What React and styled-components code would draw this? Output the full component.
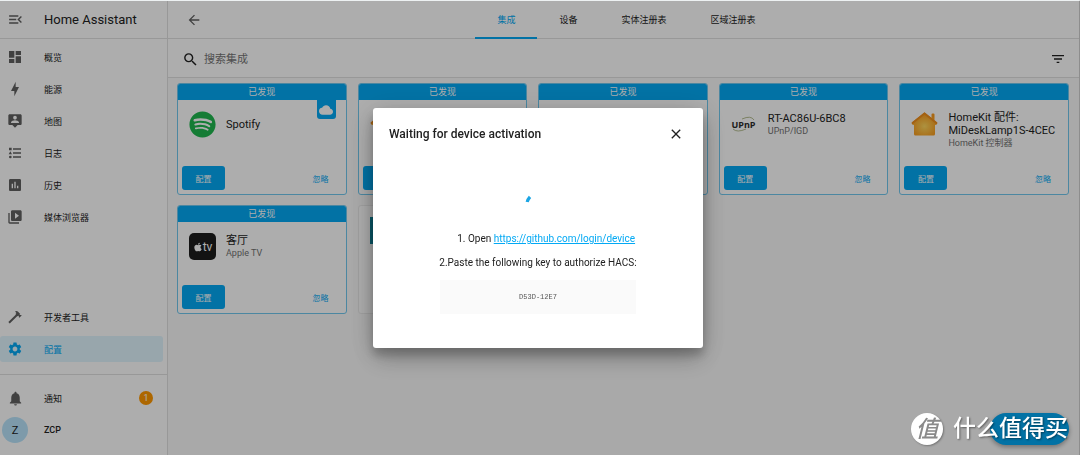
import { useState } from 'react';
import styled, { createGlobalStyle, css } from 'styled-components';
import {
  MdArrowBack,
  MdAssessment,
  MdClose,
  MdCloud,
  MdDashboard,
  MdFilterList,
  MdMenuOpen,
  MdNotifications,
  MdSearch,
  MdSettings,
  MdVideoLibrary,
} from 'react-icons/md';
import { FaApple, FaSpotify } from 'react-icons/fa';

const GlobalStyle = createGlobalStyle`
  * {
    box-sizing: border-box;
  }

  body {
    margin: 0;
    background: #fafafa;
    color: #212121;
    font-family: Roboto, 'Noto Sans CJK SC', sans-serif;
    font-size: 9px;
  }

  button,
  input {
    font: inherit;
    color: inherit;
    border: none;
    background: none;
    padding: 0;
  }

  button {
    cursor: pointer;
  }
`;

const Layout = styled.div`
  display: flex;
  min-height: 100vh;
  border-top: 1px solid #edf1f2;
  border-right: 1px solid #d0d0d0;
`;

/* ---------- sidebar ---------- */

const Sidebar = styled.aside`
  display: flex;
  flex-direction: column;
  flex: 0 0 168px;
  background: #ffffff;
  border-right: 1px solid #e0e0e0;
`;

const SidebarHeader = styled.header`
  display: flex;
  align-items: center;
  gap: 20px;
  height: 38px;
  padding-left: 7px;
  border-bottom: 1px solid #e0e0e0;
  font-size: 13px;
`;

const IconButton = styled.button`
  display: flex;
  align-items: center;
  justify-content: center;
  justify-self: start;
  color: ${props => props.$color || '#212121'};
`;

const NavList = styled.nav`
  display: flex;
  flex-direction: column;
  gap: 6px;
  padding: 5px 4px 12px 0;

  &:last-child {
    padding: 10px 4px 12px 0;
    border-top: 1px solid #e0e0e0;
  }
`;

const Spacer = styled.div`
  flex: 1;
`;

const NavLink = styled.a`
  display: flex;
  align-items: center;
  height: 26px;
  padding-right: 10px;
  border-radius: 3px;
  font-weight: ${props => (props.$strong ? 500 : 400)};
  color: #212121;
  text-decoration: none;

  svg {
    color: #606060;
  }

  ${props =>
    props.$active &&
    css`
      background: #e1f5fe;
      color: #03a9f4;

      svg {
        color: #03a9f4;
      }
    `}
`;

const NavIcon = styled.span`
  display: flex;
  justify-content: center;
  width: 30px;
  margin-right: 14px;
`;

const Count = styled.span`
  display: grid;
  place-items: center;
  width: 14px;
  height: 14px;
  margin-left: auto;
  border-radius: 50%;
  background: #ff9800;
  color: #ffffff;
`;

const Avatar = styled.span`
  display: grid;
  place-items: center;
  width: 26px;
  height: 26px;
  border-radius: 50%;
  background: #b8e4fb;
  font-size: 11px;
  font-weight: 400;
`;

/* ---------- main panel ---------- */

const Main = styled.main`
  flex: 1;
  min-width: 0;
`;

const Toolbar = styled.header`
  display: grid;
  grid-template-columns: 1fr auto 1fr;
  align-items: center;
  height: 38px;
  padding: 0 12px 0 18px;
  background: #ffffff;
  border-bottom: 1px solid #e0e0e0;
`;

const Tabs = styled.nav`
  display: flex;
  align-self: stretch;
`;

const Tab = styled.a`
  display: flex;
  align-items: center;
  height: 38px;
  padding: 0 22px;
  color: ${props => (props.$active ? '#03a9f4' : '#212121')};
  border-bottom: 2px solid
    ${props => (props.$active ? '#03a9f4' : 'transparent')};
  text-decoration: none;
`;

const SearchBar = styled.div`
  display: flex;
  align-items: center;
  gap: 5px;
  height: 39px;
  padding: 2px 13px 0 14px;
  background: #ffffff;
  border-bottom: 1px solid #e0e0e0;
`;

const SearchInput = styled.input`
  flex: 1;
  min-width: 0;
  font-size: 11px;
  outline: none;

  &::placeholder {
    color: #757575;
    opacity: 1;
  }
`;

const CardGrid = styled.div`
  display: grid;
  grid-template-columns: repeat(5, 1fr);
  gap: 10px 11px;
  padding: 5px 10px 5px 9px;
`;

const Card = styled.article`
  display: flex;
  flex-direction: column;
  min-height: 109px;
  background: #ffffff;
  border: 1px solid ${props => (props.$discovered ? '#70c8ee' : '#ececec')};
  border-radius: 3px;
  overflow: hidden;
`;

const Banner = styled.div`
  position: relative;
  height: 16px;
  line-height: 16px;
  background: #03a9f4;
  color: #ffffff;
  text-align: center;
`;

const CloudBadge = styled.span`
  position: absolute;
  top: 16px;
  right: 10px;
  display: grid;
  place-items: center;
  width: 19px;
  height: 19px;
  border-radius: 0 0 3px 3px;
  background: #03a9f4;
`;

const CardHeader = styled.div`
  display: flex;
  gap: 10px;
  padding: 11px 6px ${props => (props.$multiline ? '16px' : '0')} 11px;
`;

const Logo = styled.div`
  display: flex;
  flex: 0 0 27px;
  height: 27px;
`;

const CardText = styled.div`
  display: flex;
  flex-direction: column;
  justify-content: center;
  min-width: 0;
  min-height: 27px;
`;

const CardTitle = styled.h2`
  margin: 0;
  font-size: 11px;
  line-height: 13px;
  font-weight: 400;
`;

const CardSubtitle = styled.p`
  margin: 0;
  line-height: 13px;
  color: #727272;
`;

const CardActions = styled.div`
  display: flex;
  align-items: center;
  justify-content: space-between;
  margin-top: auto;
  padding: 0 17px 4px 4px;
`;

const PrimaryButton = styled.button`
  width: 43px;
  height: 24px;
  border-radius: 3px;
  background: #03a9f4;
  color: #ffffff;
  font-size: 8px;
`;

const TextButton = styled.button`
  color: #03a9f4;
  font-size: 8px;
`;

const AppleTile = styled.div`
  display: flex;
  align-items: center;
  justify-content: center;
  width: 27px;
  height: 27px;
  border-radius: 5px;
  background: #1d1d1d;
  color: #ffffff;
  font-size: 12px;
`;

const TealTile = styled.div`
  width: 27px;
  height: 27px;
  background: #0d8299;
`;

const Fab = styled.button`
  position: fixed;
  right: 11px;
  bottom: 10px;
  width: 79px;
  height: 32px;
  border-radius: 16px;
  background: #03a9f4;
  box-shadow: 0 2px 5px rgba(0, 0, 0, 0.35);
`;

/* ---------- dialog ---------- */

const Scrim = styled.div`
  position: fixed;
  inset: 1px 0 0;
  display: flex;
  align-items: center;
  justify-content: center;
  padding-right: 4px;
  background: rgba(0, 0, 0, 0.32);
`;

const Dialog = styled.section`
  width: 330px;
  padding: 15px 16px 34px;
  border-radius: 3px;
  background: #ffffff;
  box-shadow: 0 7px 10px rgba(0, 0, 0, 0.2), 0 12px 24px rgba(0, 0, 0, 0.18),
    0 4px 28px rgba(0, 0, 0, 0.16);
`;

const DialogHeader = styled.header`
  display: flex;
  align-items: center;
  justify-content: space-between;
  height: 21px;
  padding-right: 3px;
`;

const DialogTitle = styled.h1`
  margin: 0;
  font-size: 12px;
  font-weight: 500;
`;

const DialogBody = styled.div`
  display: flex;
  flex-direction: column;
  align-items: center;
  padding-top: 46px;
  font-size: 10px;
  line-height: 16px;
`;

const Steps = styled.ol`
  margin: 14px 0 8px;
  padding-left: 27px;
`;

const StepLink = styled.a`
  color: #03a9f4;
`;

const StepText = styled.p`
  margin: 0;
`;

const DeviceKey = styled.pre`
  width: 196px;
  margin: 9px 0 0;
  padding: 9px;
  background: #fafafa;
  color: #555555;
  font-family: 'Liberation Mono', monospace;
  font-size: 7px;
  line-height: 16px;
  text-align: center;
`;

/* ---------- watermark ---------- */

const Watermark = styled.div`
  position: fixed;
  right: 12px;
  bottom: 10px;
  display: flex;
  align-items: center;
  gap: 10px;
  color: #ffffff;
  font-size: 23px;
  font-weight: 500;
  line-height: 33px;
  text-shadow: 1px 1px 2px rgba(0, 0, 0, 0.45);
  pointer-events: none;
`;

const WatermarkSeal = styled.span`
  display: grid;
  place-items: center;
  width: 32px;
  height: 32px;
  border-radius: 50%;
  background: #ffffff;
  color: #8a8a8a;
  font-style: italic;
  text-shadow: none;
  box-shadow: 1px 1px 2px rgba(0, 0, 0, 0.3);
`;

const PathIcon = ({ d, size = 16 }) => (
  <svg width={size} height={size} viewBox="0 0 24 24" fill="currentColor">
    <path d={d} />
  </svg>
);

const BOLT = 'M11 15H6L13 1V9H18L11 23V15Z';
const PERSON_PIN =
  'M20 2H4C2.9 2 2 2.9 2 4V16C2 17.1 2.9 18 4 18H8L12 22L16 18H20C21.1 18 22 17.1 22 16V4C22 2.9 21.1 2 20 2M12 4.3C13.5 4.3 14.7 5.5 14.7 7S13.5 9.7 12 9.7 9.3 8.5 9.3 7 10.5 4.3 12 4.3M18 15H6V14.1C6 12.1 10 11 12 11S18 12.1 18 14.1V15Z';
const LIST_TYPE =
  'M5 9.5L7.5 14H2.5L5 9.5M3 4H7V8H3V4M5 20A2 2 0 1 1 5 16A2 2 0 0 1 5 20M9 5V7H21V5H9M9 19V17H21V19H9M9 11V13H21V11H9Z';
const HAMMER =
  'M2 19.63L13.43 8.2L12.72 7.5L14.14 6.07L12 3.89C13.2 2.7 15.09 2.7 16.27 3.89L19.87 7.5L18.45 8.91H21.29L22 9.62L18.45 13.21L17.74 12.5V9.62L16.27 11.04L15.56 10.33L4.13 21.76L2 19.63Z';

const HomeKitLogo = () => (
  <svg width="27" height="27" viewBox="0 0 27 27">
    <defs>
      <radialGradient id="homekit" cx="50%" cy="60%" r="55%">
        <stop offset="0" stopColor="#ffd75e" />
        <stop offset="1" stopColor="#f99a1c" />
      </radialGradient>
    </defs>
    <path
      d="M13.5 1.5 20.5 7V3.5Q20.5 2.5 21.5 2.5H22.5Q23.5 2.5 23.5 3.5V10L26 11.5Q26.5 14 24 14V23Q24 24.5 22.5 24.5H4.5Q3 24.5 3 23V14Q.5 14 1 11.5Z"
      fill="url(#homekit)"
    />
    <path
      d="M1.5 12 13.5 2.5 25.5 12"
      fill="none"
      stroke="#f08f1c"
      strokeWidth="2"
      strokeLinecap="round"
    />
  </svg>
);

const UpnpLogo = () => (
  <svg width="27" height="27" viewBox="0 0 27 27">
    <path d="M11 8Q20 4 23 9" fill="none" stroke="#a3ad76" strokeWidth="0.8" />
    <path d="M2 18Q6 22 15 18" fill="none" stroke="#a3ad76" strokeWidth="0.8" />
    <text
      x="12.5"
      y="17"
      textAnchor="middle"
      fontFamily="Open Sans"
      fontWeight="700"
      fontSize="9"
      fill="#2b2b2b"
    >
      UPnP
    </text>
  </svg>
);

const logos = {
  spotify: <FaSpotify size={27} color="#1fb74f" />,
  homekit: <HomeKitLogo />,
  upnp: <UpnpLogo />,
  apple: (
    <AppleTile>
      <FaApple size={10} />
      tv
    </AppleTile>
  ),
  teal: <TealTile />,
};

const navItems = [
  { label: '概览', icon: <MdDashboard size={16} /> },
  { label: '能源', icon: <PathIcon d={BOLT} /> },
  { label: '地图', icon: <PathIcon d={PERSON_PIN} /> },
  { label: '日志', icon: <PathIcon d={LIST_TYPE} /> },
  { label: '历史', icon: <MdAssessment size={16} /> },
  { label: '媒体浏览器', icon: <MdVideoLibrary size={16} /> },
];

const tabs = ['集成', '设备', '实体注册表', '区域注册表'];

const integrations = [
  { id: 1, logo: 'spotify', title: 'Spotify', cloud: true, discovered: true },
  { id: 2, logo: 'homekit', discovered: true },
  { id: 3, discovered: true },
  { id: 4, logo: 'upnp', title: 'RT-AC86U-6BC8', subtitle: 'UPnP/IGD', discovered: true },
  {
    id: 5,
    logo: 'homekit',
    title: 'HomeKit 配件: MiDeskLamp1S-4CEC',
    subtitle: 'HomeKit 控制器',
    multiline: true,
    discovered: true,
  },
  { id: 6, logo: 'apple', title: '客厅', subtitle: 'Apple TV', discovered: true },
  { id: 7, logo: 'teal' },
];

const IntegrationCard = ({ item }) => (
  <Card $discovered={item.discovered}>
    {item.discovered && (
      <Banner>
        已发现
        {item.cloud && (
          <CloudBadge>
            <MdCloud size={14} />
          </CloudBadge>
        )}
      </Banner>
    )}
    <CardHeader $multiline={item.multiline}>
      <Logo>{logos[item.logo]}</Logo>
      <CardText>
        {item.title && <CardTitle>{item.title}</CardTitle>}
        {item.subtitle && <CardSubtitle>{item.subtitle}</CardSubtitle>}
      </CardText>
    </CardHeader>
    {item.discovered && (
      <CardActions>
        <PrimaryButton type="button" aria-label="配置">
          {item.title && '配置'}
        </PrimaryButton>
        {item.title && <TextButton type="button">忽略</TextButton>}
      </CardActions>
    )}
  </Card>
);

const ActivationDialog = ({ onClose }) => (
  <Scrim>
    <Dialog role="dialog" aria-modal="true" aria-labelledby="dialog-title">
      <DialogHeader>
        <DialogTitle id="dialog-title">Waiting for device activation</DialogTitle>
        <IconButton type="button" aria-label="Close" onClick={onClose}>
          <MdClose size={16} />
        </IconButton>
      </DialogHeader>
      <DialogBody>
        <svg width="27" height="27" viewBox="0 0 27 27">
          <path d="M2.2 12 Q2.8 9.2 5 6.8" fill="none" stroke="#1ba5e4" strokeWidth="3.2" />
        </svg>
        <Steps>
          <li>
            Open{' '}
            <StepLink href="https://github.com/login/device">
              https://github.com/login/device
            </StepLink>
          </li>
        </Steps>
        <StepText>2.Paste the following key to authorize HACS:</StepText>
        <DeviceKey>D53D-12E7</DeviceKey>
      </DialogBody>
    </Dialog>
  </Scrim>
);

const App = () => {
  const [open, setOpen] = useState(true);

  return (
    <>
      <GlobalStyle />
      <Layout>
        <Sidebar>
          <SidebarHeader>
            <IconButton type="button" aria-label="Menu" $color="#606060">
              <MdMenuOpen size={17} />
            </IconButton>
            Home Assistant
          </SidebarHeader>
          <NavList>
            {navItems.map(({ label, icon }) => (
              <NavLink key={label} href="#">
                <NavIcon>{icon}</NavIcon>
                {label}
              </NavLink>
            ))}
          </NavList>
          <Spacer />
          <NavList>
            <NavLink href="#">
              <NavIcon>
                <PathIcon d={HAMMER} />
              </NavIcon>
              开发者工具
            </NavLink>
            <NavLink href="#" $active>
              <NavIcon>
                <MdSettings size={16} />
              </NavIcon>
              配置
            </NavLink>
          </NavList>
          <NavList>
            <NavLink href="#">
              <NavIcon>
                <MdNotifications size={17} />
              </NavIcon>
              通知
              <Count>1</Count>
            </NavLink>
            <NavLink href="#" $strong>
              <NavIcon>
                <Avatar>Z</Avatar>
              </NavIcon>
              ZCP
            </NavLink>
          </NavList>
        </Sidebar>

        <Main>
          <Toolbar>
            <IconButton type="button" aria-label="Back" $color="#606060">
              <MdArrowBack size={16} />
            </IconButton>
            <Tabs>
              {tabs.map((tab, index) => (
                <Tab key={tab} href="#" $active={index === 0}>
                  {tab}
                </Tab>
              ))}
            </Tabs>
          </Toolbar>
          <SearchBar>
            <MdSearch size={17} />
            <SearchInput type="text" placeholder="搜索集成" aria-label="搜索集成" />
            <IconButton type="button" aria-label="Filter">
              <MdFilterList size={16} />
            </IconButton>
          </SearchBar>
          <CardGrid>
            {integrations.map(item => (
              <IntegrationCard key={item.id} item={item} />
            ))}
          </CardGrid>
        </Main>
      </Layout>
      <Fab type="button" aria-label="Add integration" />
      {open && <ActivationDialog onClose={() => setOpen(false)} />}
      <Watermark>
        <WatermarkSeal>值</WatermarkSeal>
        什么值得买
      </Watermark>
    </>
  );
};

export default App;
